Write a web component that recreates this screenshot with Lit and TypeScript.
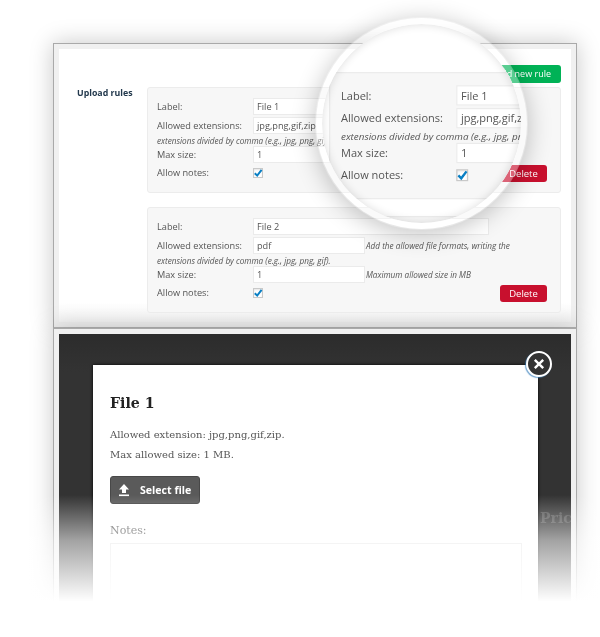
import { LitElement, html, css } from "lit";
import { customElement } from "lit/decorators.js";

@customElement("app-root")
export class AppRoot extends LitElement {
  static styles = css`
    :host { display: block; width: 600px; height: 637px; background: #fff; }
    * { box-sizing: border-box; }
    .stage { position: relative; width: 600px; height: 637px; overflow: hidden; padding: 43px 23px 0 53px; background: #fff; filter: blur(0.4px); font-family: "Open Sans", sans-serif; color: #555; }
    .frame { border: 1px solid #a9a9a9; background: #f0f0f0; padding: 5px; box-shadow: 0 0 22px rgba(0,0,0,.22); }
    .top { height: 285px; border-bottom: 1px solid #b5b5b5; }
    .admin { height: 273px; background: linear-gradient(#fff 93%, #f4f4f4); display: flex; padding: 16px 10px 0 18px; }
    .heading { width: 70px; margin-top: 22px; font-size: 8.8px; line-height: 12px; font-weight: 700; color: #23394d; }
    .col { width: 414px; display: flex; flex-direction: column; }
    .add { align-self: flex-end; width: 74px; height: 18px; margin-bottom: 4px; padding-right: 10px; border-radius: 3px; background: #00b256; color: #fff; font-size: 9px; line-height: 18px; text-align: right; }
    .panel { height: 106px; padding: 10px 9px; margin-bottom: 14px; border: 1px solid #ececec; border-radius: 3px; background: #f7f7f7; font-size: 9.2px; }
    .row { display: flex; align-items: center; height: 16px; margin-bottom: 3px; white-space: nowrap; }
    .label { width: 96px; flex: none; }
    .field { height: 17px; border: 1px solid #ebebeb; background: #fff; padding: 0 3px; line-height: 15px; color: #555; flex: none; }
    .wide { width: 236px; }
    .narrow { width: 112px; }
    .hint { font-style: italic; font-size: 8.2px; color: #555; margin-left: 1px; }
    .wrap { height: 13px; line-height: 15px; margin: -3px 0 0; white-space: nowrap; font-style: italic; font-size: 8.2px; color: #555; }
    .last { display: flex; justify-content: space-between; align-items: flex-start; margin-top: 3px; padding-right: 4px; }
    .notes { display: flex; align-items: center; height: 15px; }
    .box { width: 10px; height: 10px; border: 1px solid #c9c9c9; background: #fff; display: block; box-shadow: inset 0 1px 2px rgba(0,0,0,.1); }
    .box svg { display: block; width: 10px; height: 10px; margin: -1px; }
    .del { width: 47px; height: 17px; border-radius: 3px; background: #c8102e; color: #fff; font-size: 9.5px; font-weight: 500; line-height: 17px; text-align: center; }

    .bottom { height: 320px; border-bottom: 0; }
    .dark { position: relative; height: 320px; background: linear-gradient(#2c2c2c, #333 12%); overflow: hidden; padding: 31px 33px 0 34px; }
    .price { position: absolute; left: 481px; top: 176px; font-family: "DejaVu Serif", serif; font-weight: 700; font-size: 14px; color: #555; }
    .modal { position: relative; height: 290px; background: #fff; padding: 29px 16px 0 17px; box-shadow: 0 0 3px #000; font-family: "DejaVu Serif", serif; }
    .title { margin: 0 0 13px; font-size: 14.2px; line-height: 18px; font-weight: 700; color: #222; }
    .line { margin: 0; font-size: 10px; line-height: 20px; color: #555; }
    .select { display: flex; align-items: center; width: 90px; height: 28px; margin-top: 11px; padding-left: 7px; background: #5a5a5a; border: 1px solid #484848; border-radius: 3px; color: #fff; font-family: "Open Sans", sans-serif; font-size: 10.6px; font-weight: 700; }
    .select svg { width: 12px; height: 14px; margin-right: 10px; }
    .noteslabel { margin-top: 18px; font-size: 11px; line-height: 18px; color: #555; }
    .area { height: 100px; margin-top: 3px; border: 1px solid #e6e6e6; }
    .closewrap { position: absolute; left: 433px; top: -14px; width: 26px; height: 26px; border: 2px solid #fff; border-radius: 50%; background: #333; box-shadow: -1px 1px 1px rgba(60,130,190,.7); }
    .closewrap svg { display: block; width: 22px; height: 22px; }

    .fade { position: absolute; left: 0; right: 0; top: 495px; bottom: 0; background: linear-gradient(rgba(255,255,255,0), rgba(255,255,255,.55) 32%, #fff 75%); }
    .mag { position: absolute; left: 315px; top: 17px; width: 213px; height: 213px; border-radius: 50%; border: 7px solid rgba(255,255,255,.35); background: #fff; background-clip: padding-box; overflow: hidden; box-shadow: 0 4px 24px rgba(0,0,0,.24); }
    .lens { position: absolute; left: 7px; top: 48px; width: 414px; transform: scale(1.2); transform-origin: 0 0; display: flex; flex-direction: column; }
    .inner { position: absolute; inset: 0; border-radius: 50%; box-shadow: inset 0 0 10px rgba(0,0,0,.14); }
  `;

  private check() {
    return html`<span class="box"><svg viewBox="0 0 10 10"><path d="M1.8 5.2 4.2 7.6 8.6 1.8" fill="none" stroke="#0a7fc4" stroke-width="2"/></svg></span>`;
  }

  private panel(name: string, ext: string) {
    return html`<div class="panel">
      <div class="row"><span class="label">Label:</span><span class="field wide">${name}</span></div>
      <div class="row"><span class="label">Allowed extensions:</span><span class="field narrow">${ext}</span>
        <span class="hint">Add the allowed file formats, writing the</span></div>
      <div class="wrap">extensions divided by comma (e.g., jpg, png, gif).</div>
      <div class="row"><span class="label">Max size:</span><span class="field narrow">1</span>
        <span class="hint">Maximum allowed size in MB</span></div>
      <div class="last">
        <div class="notes"><span class="label">Allow notes:</span>${this.check()}</div>
        <div class="del">Delete</div>
      </div>
    </div>`;
  }

  render() {
    return html`<div class="stage">
      <div class="frame top">
        <div class="admin">
          <div class="heading">Upload rules</div>
          <div class="col">
            <div class="add">Add new rule</div>
            ${this.panel("File 1", "jpg,png,gif,zip")}
            ${this.panel("File 2", "pdf")}
          </div>
        </div>
      </div>
      <div class="frame bottom">
        <div class="dark">
          <div class="price">Price</div>
          <div class="modal">
            <div class="closewrap"><svg viewBox="0 0 22 22"><path d="M6.8 6.8 15.2 15.2M15.2 6.8 6.8 15.2" stroke="#fff" stroke-width="2.4" fill="none"/></svg></div>
            <h2 class="title">File 1</h2>
            <p class="line">Allowed extension: jpg,png,gif,zip.</p>
            <p class="line">Max allowed size: 1 MB.</p>
            <div class="select">
              <svg viewBox="0 0 12 14"><path d="M6 1 11 6.5H8V10H4V6.5H1Z" fill="#fff"/><rect x="1" y="11.5" width="10" height="1.6" fill="#fff"/></svg>
              Select file
            </div>
            <div class="noteslabel">Notes:</div>
            <div class="area"></div>
          </div>
        </div>
      </div>
      <div class="fade"></div>
      <div class="mag">
        <div class="lens">
          ${this.panel("File 1", "jpg,png,gif,zip")}
          ${this.panel("File 2", "pdf")}
        </div>
        <div class="inner"></div>
      </div>
    </div>`;
  }
}
